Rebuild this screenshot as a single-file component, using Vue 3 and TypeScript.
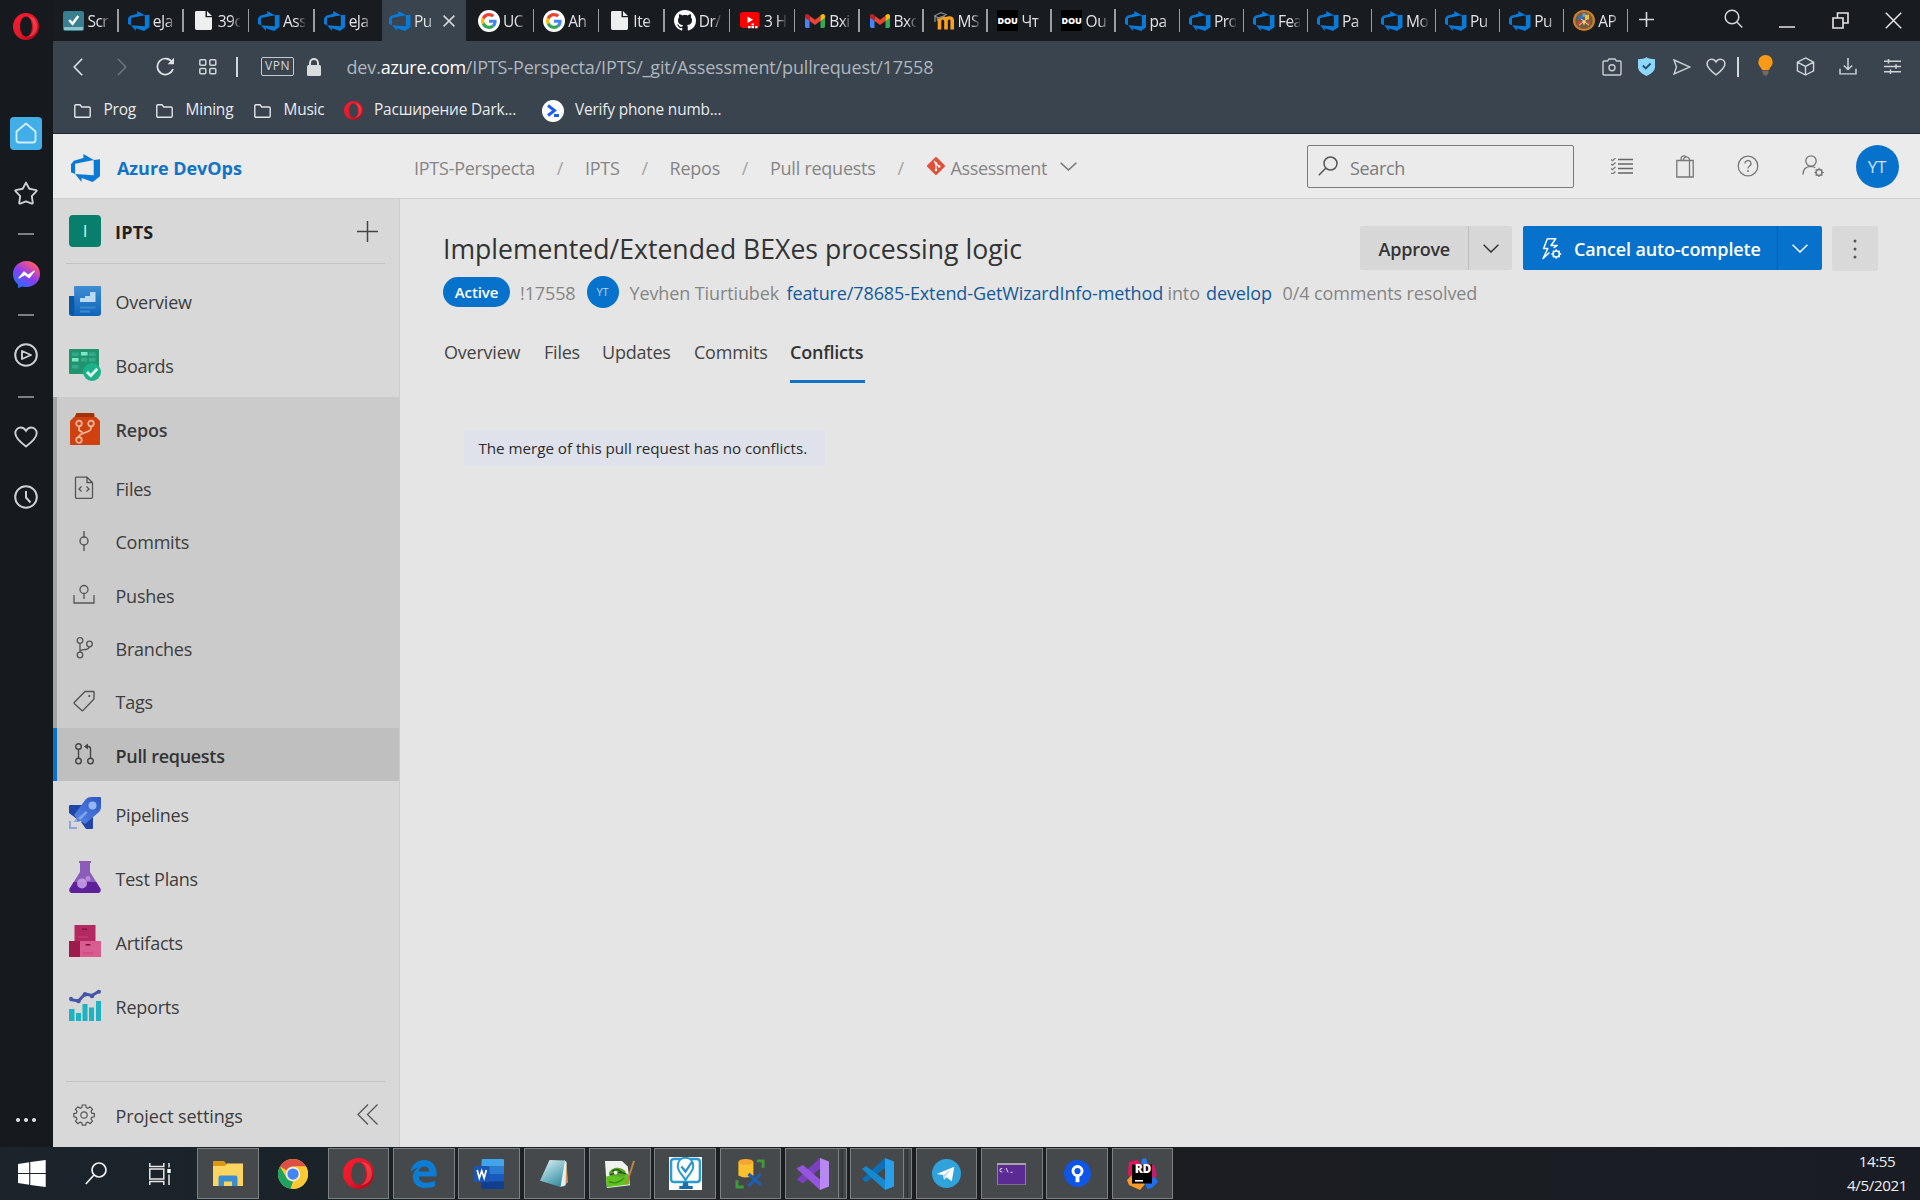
<script setup lang="ts">
import { h } from 'vue'

/* Inner markup of every glyph, keyed by name: [viewBox, markup] */
const glyphs: Record<string, [string, string]> = {
  azure: ['1 1 14 14', '<path fill="#0a7ad6" d="M15 3.622v8.512L11.5 15l-5.425-1.975v1.958L3.004 10.97l8.951.7V4.005L15 3.622zm-2.984.428L6.994 1v2.001L2.382 4.356 1 6.13v4.029l1.978.873V5.869l9.038-1.818z"/>'],
  opera: ['0 0 26 27', '<defs><linearGradient id="opg" x1="0" y1="0" x2="1" y2="1"><stop offset="0" stop-color="#ff1b2d"/><stop offset=".55" stop-color="#e0182a"/><stop offset="1" stop-color="#a70014"/></linearGradient></defs><path fill="url(#opg)" fill-rule="evenodd" d="M13 0a13 13.5 0 1 0 0 27a13 13.5 0 1 0 0-27zM13 3.6c3.6 0 5.9 4.300 5.900 9.900s-2.300 9.900-5.900 9.900s-5.900-4.300-5.900-9.900s2.300-9.900 5.900-9.900z"/><path fill="#ff5a5f" opacity=".55" d="M14.500 3.500c3.600 1 5.700 4.700 5.700 10s-2.100 9-5.700 10c6 .5 9.800-4.500 9.800-10s-3.800-10.500-9.800-10z"/>'],
  checkbox: ['0 0 22 22', '<rect width="22" height="22" rx="2.500" fill="#2f8393"/><rect x="1" y="17.500" width="20" height="3.500" rx="1" fill="#8fc4cc"/><rect x="1" y="1" width="20" height="16" rx="1.500" fill="#3a7f90"/><path d="M6.500 10l3.500 4 6-8.500" fill="none" stroke="#fff" stroke-width="2.600"/>'],
  doc: ['0 0 17 20', '<path fill="#eceef0" d="M0 1.500Q0 0 1.500 0H10.500V6.500H17V18.500Q17 20 15.500 20H1.500Q0 20 0 18.500zM12 0l5 5.200h-5z"/>'],
  google: ['0 0 22 22', '<circle cx="11" cy="11" r="11" fill="#fff"/><g transform="translate(3 3) scale(.333)"><path fill="#EA4335" d="M24 9.500c3.540 0 6.710 1.220 9.210 3.600l6.850-6.850C35.900 2.380 30.470 0 24 0 14.620 0 6.510 5.380 2.560 13.220l7.980 6.190C12.430 13.720 17.740 9.500 24 9.500z"/><path fill="#4285F4" d="M46.980 24.550c0-1.570-.15-3.090-.38-4.550H24v9.020h12.940c-.58 2.960-2.260 5.480-4.780 7.180l7.730 6c4.510-4.180 7.090-10.360 7.090-17.650z"/><path fill="#FBBC05" d="M10.530 28.590c-.48-1.450-.76-2.990-.76-4.590s.27-3.140.76-4.590l-7.980-6.190C.92 16.460 0 20.120 0 24c0 3.880.92 7.540 2.560 10.780l7.970-6.190z"/><path fill="#34A853" d="M24 48c6.480 0 11.930-2.130 15.890-5.810l-7.730-6c-2.150 1.450-4.920 2.300-8.160 2.300-6.260 0-11.570-4.220-13.470-9.910l-7.980 6.190C6.510 42.620 14.620 48 24 48z"/></g>'],
  github: ['0 0 16 16', '<path fill="#fff" d="M8 0C3.580 0 0 3.580 0 8c0 3.540 2.290 6.530 5.470 7.590.4.07.55-.17.55-.38 0-.19-.01-.82-.01-1.490-2.010.37-2.530-.49-2.690-.94-.09-.23-.48-.94-.82-1.130-.28-.15-.68-.52-.01-.53.63-.01 1.080.58 1.230.82.72 1.210 1.870.87 2.330.66.07-.52.28-.87.51-1.070-1.780-.2-3.640-.89-3.640-3.950 0-.87.31-1.590.82-2.150-.08-.2-.36-1.020.08-2.120 0 0 .67-.21 2.200.82.64-.18 1.320-.27 2-.27s1.360.09 2 .27c1.530-1.040 2.200-.82 2.200-.82.44 1.100.16 1.920.08 2.120.51.56.82 1.270.82 2.150 0 3.070-1.870 3.750-3.650 3.950.29.25.54.73.54 1.480 0 1.070-.01 1.930-.01 2.200 0 .21.15.46.55.38A8.010 8.010 0 0 0 16 8c0-4.420-3.580-8-8-8z"/>'],
  youtube: ['0 0 20 17', '<rect width="19.500" height="16" rx="3" fill="#f00"/><path fill="#fff" d="M7.500 4.500v6.500l5.500-3.200zM8 14h2.500v2.200H8zM11.500 14H14v2.200h-2.500zM15 14h2.500v2.200H15zM11.500 11.500H14v1.800h-2.500z"/>'],
  gmail: ['0 0 20 15', '<path fill="#4285f4" d="M0 2v11.500Q0 15 1.500 15h3V5z"/><path fill="#34a853" d="M20 2v11.500q0 1.500-1.500 1.500h-3V5z"/><path fill="#ea4335" d="M4.500 2l5.500 4.200L15.500 2v5.500L10 11.700 4.500 7.500z"/><path fill="#c5221f" d="M0 2.200C0 .2 2.200-.7 3.700.7l.8.7v6L0 4.100z"/><path fill="#fbbc04" d="M20 2.200C20 .2 17.800-.7 16.300.7l-.8.7v6L20 4.100z"/>'],
  moodle: ['0 0 20 20', '<path fill="none" stroke="#f9a01e" stroke-width="3.600" d="M5.500 19.500V10q0-3.500 3.200-3.500T12 10v9.500M12 19.500V10q0-3.500 3.200-3.500t3 3.500v9.500"/><path fill="none" stroke="#8a8a8a" stroke-width="1.300" d="M0 4.500L7 .800l5 2-6 4.200zM1 5v6M3.500 6v4"/>'],
  crest: ['0 0 22 22', '<circle cx="11" cy="11" r="11" fill="#c9822b"/><circle cx="11" cy="11" r="8.800" fill="#7a5a3c"/><path fill="#3b6fb5" d="M5 6h5v4H5z"/><path fill="#e8c33a" d="M12 5h4v5h-4zM9 11.500h4l-2 5z"/><path fill="#d9473a" d="M5 12h3v3H5zM14 12h3v3h-3z"/><path fill="#6fa5dd" d="M9.500 3.500h3V7h-3z"/><path d="M6 16l5-4 5 4M8 9.500l3 2 3-2" stroke="#f0e6d2" fill="none" stroke-width=".9"/>'],
  close: ['0 0 12 12', '<path d="M.6.600l10.800 10.800M11.400.600L.6 11.400" stroke="#d5d8db" stroke-width="1.500" fill="none"/>'],
  plus: ['0 0 14 14', '<path d="M7 0v14M0 7h14" stroke="#d5d8db" stroke-width="1.500"/>'],
  find: ['0 0 19 19', '<circle cx="8" cy="8" r="6.800" stroke="#d5d8db" stroke-width="1.500" fill="none"/><path d="M12.800 13l5.500 5.500" stroke="#d5d8db" stroke-width="1.500"/>'],
  minimize: ['0 0 16 16', '<path d="M0 15h16" stroke="#e5e5e5" stroke-width="1.500"/>'],
  restore: ['0 0 17 17', '<path d="M1 6h10v10H1zM5.500 6V1H16v10h-5" fill="none" stroke="#e5e5e5" stroke-width="1.600"/>'],
  closeWin: ['0 0 17 17', '<path d="M.8.800l15.400 15.400M16.200.800L.8 16.200" stroke="#e5e5e5" stroke-width="1.500"/>'],
  back: ['0 0 10 18', '<path d="M9.200.800L1.200 9l8 8.200" fill="none" stroke="#dfe2e5" stroke-width="1.600"/>'],
  forward: ['0 0 10 18', '<path d="M.8.800L8.800 9l-8 8.200" fill="none" stroke="#69737d" stroke-width="1.600"/>'],
  reload: ['0 0 19 19', '<path d="M16 5A8 8 0 1 0 17 12" fill="none" stroke="#dfe2e5" stroke-width="1.700"/><path d="M18 .800v6.400h-6.400z" fill="#dfe2e5"/>'],
  grid: ['0 0 18 16', '<g fill="none" stroke="#cfd4d8" stroke-width="1.500"><rect x=".8" y=".8" width="6" height="5.400" rx="1"/><rect x="10.800" y=".8" width="6" height="5.400" rx="1"/><rect x=".8" y="9.400" width="6" height="5.400" rx="1"/><rect x="10.800" y="9.400" width="6" height="5.400" rx="1"/></g>'],
  lock: ['0 0 14 18', '<rect y="7" width="14" height="11" rx="1.500" fill="#d9dcdf"/><path d="M3 8V5a4 4 0 0 1 8 0v3" fill="none" stroke="#d9dcdf" stroke-width="2"/>'],
  folder: ['0 0 17 14', '<path d="M.8 12V2q0-1.200 1.200-1.200h4L7.800 3H15q1.200 0 1.200 1.200V12q0 1.200-1.200 1.200H2Q.8 13.200.8 12z" fill="none" stroke="#e3e6e8" stroke-width="1.400"/>'],
  phone: ['0 0 22 22', '<circle cx="11" cy="11" r="11" fill="#fff"/><path d="M6 5.500l6.500 5L6 15.500M12 15.500h5" stroke="#1f5df0" stroke-width="3" fill="none"/>'],
  camera: ['0 0 20 18', '<path d="M1 4q0-1 1-1h3.500L7 1h6l1.500 2H18q1 0 1 1v12q0 1-1 1H2q-1 0-1-1z" fill="none" stroke="#c9ced2" stroke-width="1.400"/><circle cx="10" cy="9.700" r="3" fill="none" stroke="#c9ced2" stroke-width="1.400"/>'],
  shield: ['0 0 17 19', '<path d="M8.500 0Q10 2 17 2.200v8.300Q16.500 15.500 8.500 19 .5 15.500 0 10.500V2.200Q7 2 8.500 0z" fill="#8fd6fb"/><path d="M4.800 8.500l3 3 4.800-5" fill="none" stroke="#24506b" stroke-width="1.900"/>'],
  send: ['0 0 18 16', '<path d="M1 1l16 7L1 15l2.500-7z" fill="none" stroke="#c9ced2" stroke-width="1.400"/>'],
  heart: ['0 0 24 22', '<path d="M12 20.500C6 16 1.300 12 1.300 7.300 1.300 4 3.800 1.500 6.800 1.500c2.200 0 4 1.200 5.200 3.300 1.200-2.100 3-3.300 5.200-3.300 3 0 5.500 2.500 5.500 5.800C22.700 12 18 16 12 20.500z" fill="none" stroke="#ccd0d4" stroke-width="1.900"/>'],
  bulb: ['0 0 15 21', '<path d="M7.500 0a7.200 7.200 0 0 1 7.200 7.200c0 3.500-2.700 4.800-3.700 7.800H4C3 12 .3 10.700.3 7.200A7.200 7.200 0 0 1 7.500 0z" fill="#f89a18"/><path d="M4.500 15.500h6v2.500L9 20.500H6L4.500 18z" fill="#74695a"/>'],
  cube: ['0 0 20 20', '<path d="M10 1l8.500 4.500v9L10 19l-8.500-4.500v-9zM1.500 5.500L10 10l8.500-4.500M10 10v9" fill="none" stroke="#cfd4d8" stroke-width="1.500"/>'],
  download: ['0 0 18 18', '<path d="M9 0v12M4.800 8L9 12.200 13.200 8M1 11.500V16.800H17V11.500" fill="none" stroke="#cfd4d8" stroke-width="1.500"/>'],
  sliders: ['0 0 17 15', '<path d="M0 2.200h17M0 7.500h17M0 12.800h17M4.500 0v4.400M12 5.300v4.400M6.500 10.600V15" stroke="#cfd4d8" stroke-width="1.500"/>'],
  house: ['0 0 32 32', '<path d="M6.500 14.500L16 6.500l9.500 8v8.500q0 2.500-2.500 2.500H9q-2.500 0-2.500-2.500z" fill="none" stroke="#d2effc" stroke-width="1.800" stroke-linejoin="round"/>'],
  star: ['0 0 24 24', '<path d="M12 1.600l3.300 6.200 6.900 1.300q.9.300.3 1.100l-4.700 5 1 6.700q0 1-1 .7L12 20.300l-5.800 2.300q-1 .300-1-.7l1-6.700-4.700-5q-.6-.8.3-1.100l6.900-1.300z" fill="none" stroke="#ccd0d4" stroke-width="1.900" stroke-linejoin="round"/>'],
  messenger: ['0 0 27 27', '<defs><linearGradient id="msg" x1=".1" y1="1" x2=".8" y2="0"><stop offset="0" stop-color="#1877ff"/><stop offset=".5" stop-color="#8a3df2"/><stop offset=".85" stop-color="#f0518a"/><stop offset="1" stop-color="#ff6968"/></linearGradient></defs><path d="M13.500 0C21 0 27 5.500 27 13s-6 13-13.500 13q-2 0-4-.6L5 27v-3.600Q0 19.500 0 13C0 5.500 6 0 13.500 0z" fill="url(#msg)"/><path d="M6 17l5-6 4.200 3.200 6-4-5 6.500-4.400-3.200z" fill="#fff" stroke="#fff" stroke-width="1.200" stroke-linejoin="round"/>'],
  play: ['0 0 24 24', '<circle cx="12" cy="12" r="10.800" fill="none" stroke="#ccd0d4" stroke-width="2"/><path d="M8 8v8l9-4z" fill="none" stroke="#ccd0d4" stroke-width="1.900" stroke-linejoin="round"/>'],
  clock: ['0 0 24 24', '<circle cx="12" cy="12" r="10.800" fill="none" stroke="#ccd0d4" stroke-width="2"/><path d="M12 6v6.500l4.500 5" fill="none" stroke="#ccd0d4" stroke-width="2"/>'],
  overview: ['0 0 32 30', '<defs><linearGradient id="ovg" x1="0" y1="0" x2="0" y2="1"><stop offset="0" stop-color="#3f8dd3"/><stop offset="1" stop-color="#0d65bb"/></linearGradient></defs><path d="M0 10h6v20H3q-3 0-3-3z" fill="#0b58a6"/><path d="M5 1q0-1 1-1h25q1 0 1 1v26q0 3-3 3H3q2.500 0 2.500-3z" fill="url(#ovg)"/><path d="M11 12h5v4h-5zM16 10h5v6h-5zM21 6h5.500v10H21z" fill="#bcd9f2"/><path d="M11 20.500h15.500v2H11zM11 24.500h10v2H11z" fill="#3e88cd"/>'],
  boards: ['0 0 32 32', '<rect width="30" height="25" rx="1" fill="#22936f"/><path d="M3 3.500h6.500v3.500H3zM20 3.500h6.500v3.500H20zM12 9h6v3.500h-6zM20 9h6.500v3.500H20zM3 16h6.500v3.500H3z" fill="#33aa8b"/><path d="M12 3h6.500v3.500H12zM3 9h6.500v3.500H3z" fill="#7fe6c8"/><circle cx="23" cy="23" r="9" fill="#1bb18a"/><path d="M18 23l3.800 3.800 6.500-7" fill="none" stroke="#dff8f0" stroke-width="2.800"/>'],
  repos: ['0 0 30 32', '<path d="M6 1q0-1 1-1h16q1.500 0 1.500 1.500V4H4.500z" fill="#a33307"/><path d="M4 4h22l4 4v23q0 1-1 1H1q-1 0-1-1V8z" fill="#cf420f"/><g fill="none" stroke="#f6b9a0" stroke-width="1.700"><circle cx="9" cy="10.500" r="2.800"/><circle cx="21" cy="10.500" r="2.800"/><circle cx="9" cy="27" r="2.800"/><path d="M9 13.300v4l3.500 2.200M21 13.300v2q0 2-2.500 3l-7 2.700q-2.500 1-2.500 3.200"/></g>'],
  pipelines: ['0 0 32 32', '<defs><linearGradient id="ppg" x1="1" y1="0" x2="0" y2="1"><stop offset="0" stop-color="#2b57c8"/><stop offset="1" stop-color="#5a86e3"/></linearGradient></defs><path d="M0 9q0-1 1-1h14L8 22 0 16z" fill="#1f46a8"/><path d="M24 16v15q0 1-1 1h-6l-5-7z" fill="#1f46a8"/><path d="M17 2q2-2 5-2h9q1 0 1 1v9q0 3-2 5L16 27l-4-3-4 1-1-5-2-2z" fill="url(#ppg)"/><circle cx="23.500" cy="8.500" r="4" fill="#94b6f2"/><path d="M9 21l8-7 1.500 1.500-7 7.500z" fill="#7fa5ee"/><path d="M0 24h2v6h6v2H0zM4 25l3-3 1.500 3z" fill="#92a5d8"/>'],
  tests: ['0 0 32 32', '<path d="M10 0h12v2h-1v9l10.300 16.500Q32.500 32 28 32H4Q-.5 32 .7 27.500L11 11V2h-1z" fill="#8b5cb8"/><path d="M4.700 21h22.600l4 6.500Q32.500 32 28 32H4Q-.5 32 .7 27.500z" fill="#5e209b"/><circle cx="13" cy="22.500" r="5" fill="#c9a5e6" opacity=".85"/><circle cx="19" cy="17.500" r="2.500" fill="#b58ad9"/>'],
  artifacts: ['0 0 32 32', '<path d="M5.500 0h21v16h-21z" fill="#b32960"/><path d="M0 16h11v16H0z" fill="#9c1a4c"/><path d="M11 16h21v16H11z" fill="#d95c8e"/><path d="M13 3.500h5v1.600h-5zM16.500 19h5v1.600h-5z" fill="#7d1440"/><path d="M9 11h10v2H9zM14 27h10v2H14z" fill="#c4457a" opacity=".6"/>'],
  reports: ['0 0 32 32', '<path d="M1 10.500l8.500 1.500L16 5l7 1.500L30.500 2" fill="none" stroke="#4455ac" stroke-width="3"/><g fill="#4455ac"><circle cx="2" cy="9.800" r="2"/><circle cx="9.500" cy="12" r="2.300"/><circle cx="16" cy="5.500" r="2.300"/><circle cx="23" cy="7" r="2.300"/><circle cx="30" cy="2.700" r="2"/></g><path d="M0 20h5.500v12H0zM7 24h5v8H7zM13.500 15h5v17h-5zM20 18.500h5V32h-5zM27 12h5v20h-5z" fill="#1fb3c2"/>'],
  files: ['0 0 22 24', '<g fill="none" stroke="#555" stroke-width="1.300"><path d="M2.500 2Q2.500 1.200 3.300 1.200H14L19.500 6.500V21q0 1.300-1.300 1.300H3.800Q2.500 22.300 2.500 21zM14 1.200V6.500h5.500"/><path d="M8.500 10.500L6 13l2.500 2.500M13.500 10.500L16 13l-2.500 2.500"/></g>'],
  commits: ['0 0 22 24', '<g fill="none" stroke="#555" stroke-width="1.400"><circle cx="11" cy="12" r="4"/><path d="M11 2v6M11 16v6"/></g>'],
  pushes: ['0 0 22 24', '<g fill="none" stroke="#555" stroke-width="1.300"><circle cx="11" cy="7.500" r="4"/><path d="M11 11.500v5.500M1 13v8h20v-8"/></g>'],
  branches: ['0 0 22 24', '<g fill="none" stroke="#555" stroke-width="1.300"><circle cx="7" cy="4.500" r="2.800"/><circle cx="7" cy="19" r="2.800"/><circle cx="16.500" cy="8" r="2.800"/><path d="M7 7.300v8.900M16.500 10.800q-1 2.700-4 2.700-4 0-5.500 1.500"/></g>'],
  tags: ['0 0 22 24', '<path d="M1.200 13.500L12 2.500h8.500q.5 0 .5.500v7L10 21.500q-.6.400-1.200 0L1.200 14.500z" fill="none" stroke="#555" stroke-width="1.400"/><circle cx="16.300" cy="7" r="1.100" fill="#555"/>'],
  prs: ['0 0 22 24', '<g fill="none" stroke="#444" stroke-width="1.400"><circle cx="5.500" cy="4.500" r="2.800"/><circle cx="5.500" cy="19" r="2.800"/><circle cx="17.500" cy="19" r="2.800"/><path d="M5.500 7.300v8.900M17.500 16.200V7q0-2.500-2.500-2.500h-3"/></g><path d="M11 4.500l4-3v6z" fill="#444"/>'],
  gear: ['0 0 22 22', '<circle cx="11" cy="11" r="3.200" fill="none" stroke="#555" stroke-width="1.200"/><path d="M9.300 1h3.400l.5 2.600 1.700.7L17.100 2.800l2.400 2.400-1.500 2.200.7 1.700 2.600.5v3.200l-2.600.5-.7 1.700 1.500 2.200-2.400 2.400-2.200-1.500-1.700.7-.5 2.400H9.300l-.5-2.400-1.700-.7-2.200 1.500-2.400-2.400L4 15l-.7-1.700L.8 12.800V9.600l2.500-.5L4 7.400 2.500 5.200l2.400-2.400 2.200 1.500 1.700-.7z" fill="none" stroke="#555" stroke-width="1.200"/>'],
  collapse: ['0 0 21 21', '<path d="M11 .500L1 10.500l10 10M20.500.500l-10 10 10 10" fill="none" stroke="#555" stroke-width="1.300"/>'],
  add: ['0 0 21 21', '<path d="M10.500 0v21M0 10.500h21" stroke="#444" stroke-width="1.500"/>'],
  git: ['0 0 20 20', '<rect x="3.300" y="3.300" width="13.400" height="13.400" rx="1" transform="rotate(45 10 10)" fill="#e0503a"/><path d="M8 5l2 2v7M10 7.500l3 3" stroke="#fff" stroke-width="1.100" fill="none"/><circle cx="10" cy="7.500" r="1.200" fill="#fff"/><circle cx="10" cy="14" r="1.200" fill="#fff"/><circle cx="13.200" cy="10.500" r="1.200" fill="#fff"/>'],
  chevron: ['0 0 16 9', '<path d="M.6.800L8 8l7.400-7.200" fill="none" stroke="currentColor" stroke-width="1.500"/>'],
  search: ['0 0 20 20', '<circle cx="12.500" cy="7.500" r="6.500" stroke="#555" stroke-width="1.500" fill="none"/><path d="M7.700 12.200L.8 19.200" stroke="#555" stroke-width="1.500"/>'],
  list: ['0 0 22 16', '<path d="M7 1.500h15M7 6h15M7 10.500h15M7 15h15" stroke="#666" stroke-width="1.500"/><path d="M0 1.500l1.500 1.300L4.500 0M0 6l1.500 1.300L4.500 4.500M0 10.500l1.500 1.300L4.500 9M0 15l1.500 1.300L4.500 13.500" stroke="#777" stroke-width="1.200" fill="none"/>'],
  bag: ['0 0 18 23', '<path d="M.8 5.500h16.400V22H.8zM13.500 5.500V22M5 5.500V4a3 3 0 0 1 5 -2.300M7.500 5.500V4a3.200 3.200 0 0 1 6 0v1.500" fill="none" stroke="#777" stroke-width="1.300"/>'],
  help: ['0 0 22 22', '<circle cx="11" cy="11" r="9.800" fill="none" stroke="#777" stroke-width="1.300"/><path d="M8 8.500a3 3 0 1 1 4.300 2.700q-1.300.7-1.300 2.300" fill="none" stroke="#777" stroke-width="1.300"/><circle cx="11" cy="16" r="1" fill="#777"/>'],
  person: ['0 0 22 22', '<circle cx="9" cy="6" r="5.200" fill="none" stroke="#777" stroke-width="1.300"/><path d="M1 19.500q0-8 8-8.200 2.500 0 4.200 1.400" fill="none" stroke="#777" stroke-width="1.300"/><circle cx="17" cy="17.500" r="3" fill="none" stroke="#777" stroke-width="1.600"/><path d="M17 12.800v1.700M17 20.500v1.500M12.500 17.500H14M20 17.500h2M13.700 14.300l1 1M20.300 20.700l-1-1M20.300 14.300l-1 1M13.700 20.700l1-1" stroke="#777" stroke-width="1.200"/>'],
  bolt: ['0 0 20 22', '<path d="M6 .8h8L9.500 7.500h6L12 10M6 .8L2.500 10.500h4L2 20.500l6-6" fill="none" stroke="#fff" stroke-width="1.400" stroke-linejoin="round"/><circle cx="14.500" cy="16" r="3" fill="none" stroke="#fff" stroke-width="1.600"/><path d="M14.500 11.300v1.700M14.500 19v1.800M9.800 16h1.700M17.500 16h1.800M11.200 12.700l1.200 1.200M17.800 19.300l-1.200-1.200M17.800 12.700l-1.200 1.200M11.200 19.300l1.200-1.200" stroke="#fff" stroke-width="1.300"/>'],
  more: ['0 0 4 20', '<circle cx="2" cy="2" r="1.500" fill="#555"/><circle cx="2" cy="10" r="1.500" fill="#555"/><circle cx="2" cy="18" r="1.500" fill="#555"/>'],
  windows: ['0 0 28 27', '<path fill="#fff" d="M0 3.900l11.200-1.600V13H0zM12.300 2.100L27.700 0v13H12.300zM0 14h11.200v10.700L0 23.100zM12.300 14h15.400v13l-15.400-2.100z"/>'],
  taskFind: ['0 0 22 23', '<circle cx="14" cy="8" r="7" stroke="#f0f0f0" stroke-width="1.700" fill="none"/><path d="M9 13L.8 22" stroke="#f0f0f0" stroke-width="1.700"/>'],
  taskView: ['0 0 22 22', '<path d="M.8 0v3.500h14V0M.8 22v-3.500h14V22M.8 6h14v10H.8z" fill="none" stroke="#e8e8e8" stroke-width="1.500"/><path d="M20 0v4.500M20 11.500V22" stroke="#e8e8e8" stroke-width="1.500"/><path d="M18.300 6h3.400v4h-3.400z" fill="#fff"/>'],
  explorer: ['0 0 30 26', '<path d="M0 0h11l2.500 3v5H0z" fill="#d9980f"/><path d="M0 5h12l2-2.500h16V25H0z" fill="#fbd560"/><path d="M5.500 25v-8.500q0-2 2-2h15q2 0 2 2V25h-5.500v-4.500h-8V25z" fill="#3a8dd0"/>'],
  chrome: ['0 0 48 48', '<circle cx="24" cy="24" r="24" fill="#fcc934"/><path d="M24 0A24 24 0 0 1 44.800 12H24A12 12 0 0 0 13.600 18L3.200 12A24 24 0 0 1 24 0z" fill="#dd5144"/><path d="M3.200 12L13.600 30A12 12 0 0 0 24 36L20 47.700A24 24 0 0 1 3.200 12z" fill="#1ea362"/><path d="M34.400 30L24 48A24 24 0 0 0 44.800 12H24A12 12 0 0 1 34.400 30z" fill="#fcc934"/><circle cx="24" cy="24" r="11.500" fill="#f1f1f1"/><circle cx="24" cy="24" r="9" fill="#4285f4"/>'],
  edge: ['0 0 28 29', '<path fill="#0c7cd5" d="M.5 12.500C2 4 8 0 14.500 0 22.500 0 27.500 5.500 27.500 13v4H9c.3 4.500 4 6.500 8.500 6.500 3.300 0 6-.9 8.500-2.300V27c-3 1.500-6.500 2-10 2C8 29 3 24.500 3 17.500c0-4.500 2.500-8 6.500-10C6 8.200 2.500 10 .5 12.500zM9 12h11c0-3.500-2-5.300-5.300-5.300C11.500 6.700 9.500 9 9 12z"/>'],
  word: ['0 0 32 30', '<path d="M8 1q0-1 1-1h21q1 0 1 1v6.500H7.500z" fill="#41a5ee"/><path d="M7.500 7.500H31V15H7.500z" fill="#2b7cd3"/><path d="M7.500 15H31v7.500H7.500z" fill="#185abd"/><path d="M7.500 22.500H31V29q0 1-1 1H8.500q-1 0-1-1z" fill="#103f91"/><rect y="7" width="16" height="16" rx="1.500" fill="#1a55b5"/><path d="M3.300 11l2.200 8L8 12l2.500 7 2.200-8" stroke="#fff" stroke-width="1.800" fill="none"/>'],
  notepad: ['0 0 30 30', '<defs><linearGradient id="npg" x1="0" y1="0" x2=".6" y2="1"><stop offset="0" stop-color="#e9f6f8"/><stop offset=".5" stop-color="#8ec4d0"/><stop offset="1" stop-color="#3f93a6"/></linearGradient></defs><path d="M24 28.500l5-4.500L27.500 4 25 2z" fill="#c9955a"/><path d="M21 29l5.500-1.500L27.500 3 25 1z" fill="#e9edee"/><path d="M10.500 1L26 1.500 21.500 29 1 22.500z" fill="url(#npg)"/>'],
  notepadpp: ['0 0 32 32', '<path d="M1 2h17.500l6 6L27 28 3 31z" fill="#f0f2ee"/><path d="M2 19q10-4 23-3l1.500 11L3 30z" fill="#5fc41f"/><path d="M5 15c3-7 12-7 16-3s0 8-6 7-9 1-10-4z" fill="#5aa52a"/><path d="M6 17q9-5 17-1M8 13q6-4 10 1" fill="none" stroke="#234a12" stroke-width="1.300"/><circle cx="12" cy="14.500" r="2" fill="#e8f5de"/><path d="M31 2L23 27" stroke="#c0843c" stroke-width="2"/><path d="M5 24q8 4 16-4" fill="none" stroke="#3c8d15" stroke-width="1.500"/>'],
  board: ['0 0 32 33', '<path d="M0 0h32v33H0z" fill="#fff"/><path d="M5 2h22q3 0 3 3v17q0 3-3 3H5q-3 0-3-3V5q0-3 3-3z" fill="none" stroke="#2b9bd1" stroke-width="2.400"/><path d="M14 25h4l1 4h4v3H10v-3h3z" fill="#1a6fa8"/><path d="M16 .800c5 0 7.500 4 7.500 8.500 0 6-5 8-7.500 14-2.500-6-7.500-8-7.500-14C8.500 4.800 11 .8 16 .8z" fill="#fff" stroke="#2b9bd1" stroke-width="2"/><path d="M12 9.500l4 5 6.500-10" fill="none" stroke="#2b8fc9" stroke-width="2.200"/>'],
  ssms: ['0 0 32 32', '<path d="M3.500 4v14q7 4 15.500 0V4z" fill="#fbc02d"/><ellipse cx="11.200" cy="4" rx="7.700" ry="3" fill="#f7a531"/><path d="M22.500 3H29v7M2 23v7h7" fill="none" stroke="#3f9a3b" stroke-width="3"/><path d="M14 16.500L27 28M26 16.500L14 29" stroke="#1f5fb0" stroke-width="3.300"/>'],
  vs: ['0 0 32 32', '<path d="M23 0l9 3.500v25L23 32z" fill="#b888f2"/><path d="M23 0v10.500L6 25.500 0 22V21z" fill="#7b3fc0"/><path d="M23 32V21.500L6 7 0 10v1z" fill="#9556dd"/>'],
  vscode: ['0 0 32 32', '<path d="M23 0l9 3.500v25L23 32z" fill="#26a0ea"/><path d="M23 0v10L4 24.500 0 21z" fill="#0d6fb8"/><path d="M23 32V22L4 8 0 11z" fill="#1689cf"/>'],
  telegram: ['0 0 30 30', '<circle cx="15" cy="15" r="15" fill="#30a3dc"/><path d="M5 15.500L23 8l-2.500 15-5.500-4-2.500 2.500-1-5z" fill="#fff"/><path d="M11.500 16.500L20 10.500l-6 7.500-1.500 3.500z" fill="#c6dcea"/>'],
  cmd: ['0 0 30 22', '<rect width="29" height="21.500" x=".5" y=".3" fill="#5b2b93" stroke="#8c8c8c"/><path d="M0 0h30v2H0z" fill="#a5a5a8"/><path d="M5.500 5.500Q3 5 3 7.200T5.500 9M7.500 6.500v.3M7.500 8.500v.3M9.500 5l2 4.500M14 9.300h2" stroke="#e5d9f2" stroke-width="1" fill="none"/>'],
  sourcetree: ['0 0 28 28', '<circle cx="14" cy="14" r="14" fill="#0f56e6"/><circle cx="14" cy="11.500" r="4.700" fill="none" stroke="#fff" stroke-width="3"/><path d="M12 16h4v7h-4z" fill="#fff"/>'],
  rider: ['0 0 31 32', '<path d="M2 4l8-2 6 6-2 14-9 2-4-8z" fill="#e8125c"/><path d="M14 2l3-2 3 5 8 3 2 10-5 3-10-9z" fill="#c21d6b"/><path d="M15 1l4-1 2 7h-7z" fill="#2a76e8"/><path d="M0 22l6-6 12 10-5 6L2 27z" fill="#fd9c28"/><path d="M18 24l10-5 3 5-6 6-5 1z" fill="#1f6ff0"/><rect x="5" y="6.500" width="20" height="19" fill="#000"/><path d="M8 22.800h8" stroke="#fff" stroke-width="1.600"/>'],
}

/* Draws one glyph, stretched to the given width and height */
const Ic = (p: { n: string; w: number | string; h?: number | string }) => {
  const [box, inner] = glyphs[p.n]
  return h('svg', {
    viewBox: box,
    width: p.w,
    height: p.h ?? p.w,
    preserveAspectRatio: 'none',
    style: 'display:block;flex:none',
    innerHTML: inner,
  })
}

interface Tab { icon: string; text: string; w: number; iw?: number; ih?: number; active?: boolean; noline?: boolean }
const az = { icon: 'azure', iw: 21.500, ih: 20 }
const tabs: Tab[] = [
  { icon: 'checkbox', text: 'Scr', w: 65.400, iw: 21, ih: 20 },
  { ...az, text: 'eJa', w: 64.900 },
  { icon: 'doc', text: '39c', w: 65.300, iw: 17, ih: 19 },
  { ...az, text: 'Ass', w: 65.700 },
  { ...az, text: 'eJa', w: 68.100, noline: true },
  { ...az, text: 'Pu', w: 84.100, active: true, noline: true },
  { icon: 'google', text: 'UC', w: 67.400, iw: 22, ih: 22 },
  { icon: 'google', text: 'Ah', w: 65.100, iw: 22, ih: 22 },
  { icon: 'doc', text: 'Ite', w: 65.400, iw: 17, ih: 19 },
  { icon: 'github', text: 'Dr/', w: 65.200, iw: 22, ih: 21 },
  { icon: 'youtube', text: '3 H', w: 65.300, iw: 20, ih: 17 },
  { icon: 'gmail', text: 'Bxi', w: 64.400, iw: 20, ih: 14 },
  { icon: 'gmail', text: 'Bxo', w: 64, iw: 20, ih: 14 },
  { icon: 'moodle', text: 'MS', w: 64, iw: 20, ih: 18 },
  { icon: 'dou', text: 'Чт', w: 64 },
  { icon: 'dou', text: 'Ou', w: 64 },
  { ...az, text: 'pa', w: 64.300 },
  { ...az, text: 'Pro', w: 64 },
  { ...az, text: 'Fea', w: 64 },
  { ...az, text: 'Pa', w: 64.100 },
  { ...az, text: 'Mo', w: 64 },
  { ...az, text: 'Pu', w: 64.200 },
  { ...az, text: 'Pu', w: 64 },
  { icon: 'crest', text: 'AP', w: 64, iw: 22, ih: 21 },
]

const services = [
  { icon: 'overview', label: 'Overview', h: 30 },
  { icon: 'boards', label: 'Boards', h: 32 },
]
const repoItems = [
  { icon: 'files', label: 'Files' },
  { icon: 'commits', label: 'Commits' },
  { icon: 'pushes', label: 'Pushes' },
  { icon: 'branches', label: 'Branches' },
  { icon: 'tags', label: 'Tags' },
  { icon: 'prs', label: 'Pull requests', selected: true },
]
const services2 = [
  { icon: 'pipelines', label: 'Pipelines' },
  { icon: 'tests', label: 'Test Plans' },
  { icon: 'artifacts', label: 'Artifacts' },
  { icon: 'reports', label: 'Reports' },
]
const crumbs = ['IPTS-Perspecta', 'IPTS', 'Repos', 'Pull requests']
const prTabs = ['Overview', 'Files', 'Updates', 'Commits', 'Conflicts']

interface App { icon: string; w: number; h: number; open?: boolean; stack?: boolean }
const apps: App[] = [
  { icon: 'explorer', w: 30, h: 26, open: true },
  { icon: 'chrome', w: 30, h: 30 },
  { icon: 'opera', w: 31, h: 31, open: true },
  { icon: 'edge', w: 27, h: 28, open: true },
  { icon: 'word', w: 31, h: 30, open: true },
  { icon: 'notepad', w: 30, h: 29, open: true },
  { icon: 'notepadpp', w: 31, h: 30, open: true },
  { icon: 'board', w: 33, h: 33, open: true },
  { icon: 'ssms', w: 31, h: 31, open: true },
  { icon: 'vs', w: 32, h: 32, open: true, stack: true },
  { icon: 'vscode', w: 32, h: 32, open: true, stack: true },
  { icon: 'telegram', w: 29, h: 29, open: true },
  { icon: 'cmd', w: 29, h: 22, open: true },
  { icon: 'sourcetree', w: 27, h: 27, open: true },
  { icon: 'rider', w: 31, h: 32, open: true },
]
</script>

<template>
  <div class="screen">
    <div class="browser">
      <aside class="rail">
        <Ic n="opera" w="26" h="27" class="r-opera" />
        <div class="r-home"><Ic n="house" w="32" /></div>
        <Ic n="star" w="24" class="r-star" />
        <i class="dash d1"></i>
        <Ic n="messenger" w="27" class="r-msg" />
        <i class="dash d2"></i>
        <Ic n="play" w="24" class="r-play" />
        <i class="dash d3"></i>
        <Ic n="heart" w="24" h="22" class="r-heart" />
        <Ic n="clock" w="24" class="r-clock" />
        <div class="dots"><i></i><i></i><i></i></div>
      </aside>

      <div class="window">
        <div class="tabstrip">
          <div
            v-for="(t, i) in tabs"
            :key="i"
            class="tab"
            :class="{ active: t.active, noline: t.noline, after: i === 6 }"
            :style="{ width: t.w + 'px' }"
          >
            <span class="fav">
              <span v-if="t.icon === 'dou'" class="dou">DOU</span>
              <Ic v-else :n="t.icon" :w="t.iw!" :h="t.ih!" />
            </span>
            <span class="tabtext">{{ t.text }}</span>
            <Ic v-if="t.active" n="close" w="12" class="tabclose" />
          </div>
          <Ic n="plus" w="15" class="newtab" />
          <div class="wincontrols">
            <Ic n="find" w="19" class="c1" />
            <Ic n="minimize" w="16" class="c2" />
            <Ic n="restore" w="17" class="c3" />
            <Ic n="closeWin" w="17" class="c4" />
          </div>
        </div>

        <div class="address">
          <Ic n="back" w="10" h="18" />
          <Ic n="forward" w="10" h="18" class="a2" />
          <Ic n="reload" w="19" class="a3" />
          <Ic n="grid" w="18" h="16" class="a4" />
          <i class="bar a5"></i>
          <span class="vpn">VPN</span>
          <Ic n="lock" w="14" h="18" class="a6" />
          <span class="url">dev.<b>azure.com</b>/IPTS-Perspecta/IPTS/_git/Assessment/pullrequest/17558</span>
          <div class="tools">
            <Ic n="camera" w="20" h="18" />
            <Ic n="shield" w="17" h="19" class="t2" />
            <Ic n="send" w="18" h="16" class="t3" />
            <Ic n="heart" w="20" h="18" class="t4" />
            <i class="bar t5"></i>
            <Ic n="bulb" w="15" h="21" class="t6" />
            <Ic n="cube" w="19" h="19" class="t7" />
            <Ic n="download" w="18" h="17" class="t8" />
            <Ic n="sliders" w="17" h="15" class="t9" />
          </div>
        </div>

        <div class="bookmarks">
          <span class="bm b1"><Ic n="folder" w="17" h="14" /><span>Prog</span></span>
          <span class="bm b2"><Ic n="folder" w="17" h="14" /><span>Mining</span></span>
          <span class="bm b3"><Ic n="folder" w="17" h="14" /><span>Music</span></span>
          <span class="bm b4"><Ic n="opera" w="19" h="19" /><span>Расширение Dark...</span></span>
          <span class="bm b5"><Ic n="phone" w="22" h="22" /><span>Verify phone numb...</span></span>
        </div>

        <div class="page">
          <header class="top">
            <Ic n="azure" w="29" h="28" class="logo" />
            <span class="brand">Azure DevOps</span>
            <nav class="crumbs">
              <template v-for="c in crumbs" :key="c"><span>{{ c }}</span><i class="slash">/</i></template>
              <Ic n="git" w="20" class="git" />
              <span class="cur">Assessment</span>
              <Ic n="chevron" w="17" h="9" class="cchev" />
            </nav>
            <div class="searchbox"><Ic n="search" w="20" /><span>Search</span></div>
            <div class="topicons">
              <Ic n="list" w="22" h="16" />
              <Ic n="bag" w="18" h="23" />
              <Ic n="help" w="22" h="22" />
              <Ic n="person" w="22" h="22" />
            </div>
            <div class="me">YT</div>
          </header>

          <div class="body">
            <aside class="side">
              <div class="project">
                <span class="badge">I</span><b>IPTS</b>
                <Ic n="add" w="21" class="plus" />
              </div>
              <div class="row" v-for="s in services" :key="s.label">
                <Ic :n="s.icon" w="32" :h="s.h" /><span>{{ s.label }}</span>
              </div>
              <div class="group">
                <div class="row strong"><Ic n="repos" w="30" h="32" class="rp" /><span>Repos</span></div>
                <div class="sub" v-for="r in repoItems" :key="r.label" :class="{ sel: r.selected }">
                  <Ic :n="r.icon" w="22" h="24" /><span>{{ r.label }}</span>
                </div>
              </div>
              <div class="row low" v-for="s in services2" :key="s.label">
                <Ic :n="s.icon" w="32" /><span>{{ s.label }}</span>
              </div>
              <div class="settings">
                <Ic n="gear" w="22" /><span>Project settings</span>
                <Ic n="collapse" w="21" class="plus" />
              </div>
            </aside>

            <main class="content">
              <div class="titlebar">
                <h1>Implemented/Extended BEXes processing logic</h1>
                <div class="actions">
                  <div class="approve"><span>Approve</span><i><Ic n="chevron" w="16" h="9" /></i></div>
                  <div class="cancel">
                    <span><Ic n="bolt" w="21" h="22" />Cancel auto-complete</span>
                    <i><Ic n="chevron" w="16" h="9" /></i>
                  </div>
                  <div class="morebtn"><Ic n="more" w="4" h="20" /></div>
                </div>
              </div>
              <div class="meta">
                <span class="pill">Active</span>
                <span>!17558</span>
                <span class="ava">YT</span>
                <span>Yevhen Tiurtiubek</span>
                <a>feature/78685-Extend-GetWizardInfo-method</a>
                <span>into</span>
                <a>develop</a>
                <span>0/4 comments resolved</span>
              </div>
              <nav class="prtabs">
                <span v-for="t in prTabs" :key="t" :class="{ on: t === 'Conflicts' }">{{ t }}</span>
              </nav>
              <div class="notice">The merge of this pull request has no conflicts.</div>
            </main>
          </div>
        </div>
      </div>
    </div>

    <footer class="taskbar">
      <div class="sys"><Ic n="windows" w="28" h="27" /></div>
      <div class="sys"><Ic n="taskFind" w="22" h="23" /></div>
      <div class="sys"><Ic n="taskView" w="22" h="22" /></div>
      <div class="apps">
        <div v-for="a in apps" :key="a.icon" class="app" :class="{ open: a.open, stack: a.stack }">
          <Ic :n="a.icon" :w="a.w" :h="a.h" />
          <span v-if="a.icon === 'rider'" class="rd">RD</span>
        </div>
      </div>
      <div class="time"><span>14:55</span><span>4/5/2021</span></div>
    </footer>
  </div>
</template>

<style>
body { margin: 0; overflow: hidden; background: #16191e; }
</style>
<style scoped>
* { box-sizing: border-box; }
i { font-style: normal; }
.screen {
  width: 1920px; height: 1200px; display: flex; flex-direction: column; overflow: hidden;
  font: 400 18px/24px "Open Sans", "Noto Sans", sans-serif; letter-spacing: -0.220px; white-space: nowrap;
  background: #16191e;
}
.browser { display: flex; height: 1147px; }

/* Opera side rail */
.rail { width: 53px; padding-right: 1px; display: flex; flex-direction: column; align-items: center; background: #16191e; height: 1147px; }
.r-opera { margin-top: 13px; }
.r-home { width: 32px; height: 33px; margin-top: 77px; border-radius: 4px; background: #42aee8; }
.r-star { margin-top: 31px; }
.dash { width: 16px; height: 2px; background: #7b8086; flex: none; }
.d1 { margin-top: 28px; }
.r-msg { margin-top: 26px; }
.d2 { margin-top: 26px; }
.r-play { margin-top: 27px; }
.d3 { margin-top: 29px; }
.r-heart { margin-top: 28px; }
.r-clock { margin-top: 37px; }
.dots { display: flex; gap: 4px; margin-top: auto; margin-bottom: 25px; }
.dots i { width: 4px; height: 4px; border-radius: 50%; background: #e3e5e7; }

.window { width: 1867px; display: flex; flex-direction: column; }

/* tab strip */
.tabstrip { height: 41px; display: flex; background: #181b20; }
.tab { flex: none; height: 41px; display: flex; align-items: center; padding-left: 9.400px; position: relative; }
.tab::after { content: ""; position: absolute; right: -0.500px; top: 9px; width: 1.500px; height: 23px; background: #9a9da1; }
.tab.noline::after { display: none; }
.tab.active { background: #3a444f; padding-left: 6.600px; }
.tab.after { padding-left: 11.500px; }
.fav { width: 22px; display: flex; justify-content: center; }
.dou { width: 21px; height: 21px; background: #000; color: #fff; font: 800 9px/21px "Open Sans", sans-serif; letter-spacing: -0.200px; text-align: center; }
.tabtext { margin-left: 3px; width: 22px; overflow: hidden; font-size: 15.500px; color: #e2e3e5; letter-spacing: -0.500px;
  -webkit-mask-image: linear-gradient(90deg, #000 60%, rgba(0,0,0,.15)); mask-image: linear-gradient(90deg, #000 60%, rgba(0,0,0,.15)); }
.tabclose { margin-left: 7px; }
.newtab { margin: 12px 0 0 11px; }
.wincontrols { display: flex; margin-left: 70px; }
.c1 { margin-top: 9px; }
.c2 { margin: 12px 0 0 36px; }
.c3 { margin: 12px 0 0 37px; }
.c4 { margin: 12px 0 0 36px; }

/* address bar */
.address { height: 51px; display: flex; align-items: center; background: #3a444f; padding-left: 20px; }
.bar { width: 2px; height: 20px; background: #d5d8db; }
.a2 { margin-left: 34px; }
.a3 { margin-left: 28.500px; }
.a4 { margin-left: 24px; }
.a5 { margin-left: 19.500px; }
.vpn { margin-left: 23px; width: 33px; height: 19px; border: 1.500px solid #c5cace; border-radius: 2px; color: #d5d9dc; font-size: 12px; font-weight: 500; line-height: 16px; letter-spacing: .6px; text-align: center; }
.a6 { margin-left: 12.500px; }
.url { margin-left: 26px; color: #aeb6be; letter-spacing: -0.150px; }
.url b { font-weight: 400; color: #fff; letter-spacing: -0.300px; }
.tools { margin-left: auto; margin-right: 19.500px; display: flex; align-items: center; }
.t2 { margin-left: 16px; }
.t3 { margin-left: 18px; }
.t4 { margin-left: 15px; }
.t5 { margin-left: 11px; }
.t6 { margin-left: 19px; margin-top: -2px; }
.t7 { margin-left: 23px; }
.t8 { margin-left: 24px; }
.t9 { margin-left: 27px; }

/* bookmarks */
.bookmarks { height: 42px; display: flex; background: #3a444f; border-bottom: 1px solid #20262c; padding-left: 21px; color: #e8eaec; font-size: 15.400px; letter-spacing: -0.170px; }
.bm { display: flex; align-items: center; height: 37px; }
.bm span { padding-bottom: 2px; }
.b1 { width: 82px; gap: 12.500px; }
.b2 { width: 98px; gap: 12.500px; }
.b3 { width: 89.500px; gap: 12.500px; }
.b4 { width: 198.500px; gap: 11.500px; }
.b5 { gap: 11px; }

/* page */
.page { height: 1013px; display: flex; flex-direction: column; background: #e5e5e5; }
.top { height: 65px; background: #ebebeb; border-bottom: 1px solid #cfcfcf; display: flex; align-items: center; padding-left: 17.500px; }
.logo { margin-top: 3px; }
.brand { margin: 3px 0 0 17.500px; width: 297px; font-weight: 700; color: #1173c5; letter-spacing: -0.050px; }
.crumbs { display: flex; align-items: center; color: #858585; width: 892.500px; letter-spacing: -0.250px; }
.crumbs span, .slash { padding-top: 3px; }
.slash { width: 50px; text-align: center; color: #a5a5a5; }
.crumbs .cur { margin-left: 5px; letter-spacing: -0.350px; }
.cchev { margin-left: 13px; color: #777; }
.searchbox { width: 267px; height: 43px; border: 1.500px solid #7b7b7b; border-radius: 2px; display: flex; align-items: center; padding-left: 10px; color: #7c7c7c; }
.searchbox span { margin-left: 12.500px; padding-top: 3px; letter-spacing: -0.350px; }
.topicons { display: flex; align-items: center; margin-left: 37px; width: 214px; justify-content: space-between; }
.me { margin-left: 31px; width: 43px; height: 43px; border-radius: 50%; background: #0672cb; color: #cfe2f5; font-size: 17px; line-height: 43px; text-align: center; }
.body { display: flex; height: 948px; }

/* project navigation */
.side { width: 347px; background: #d8d8d8; border-right: 1px solid #cccccc; display: flex; flex-direction: column; color: #3d3d3d; }
.project { height: 65px; margin: 0 14px 5px 13px; padding-left: 3px; border-bottom: 1.500px solid #c2c2c2; display: flex; align-items: center; color: #1f1f1f; }
.badge { width: 32px; height: 32px; border-radius: 4px; background: #087f6c; color: #d5ece8; font-size: 17px; line-height: 32px; text-align: center; }
.project b { margin-left: 14px; letter-spacing: .2px; padding-top: 1px; }
.plus { margin-left: auto; margin-right: 7px; }
.row { height: 64px; display: flex; align-items: center; padding-left: 16px; flex: none; }
.row span, .sub span { margin-left: 14.500px; padding-top: 2px; }
.low span { padding-top: 4px; }
.group { background: #cbcbcb; border-left: 4px solid #a2a3a5; }
.group .row { padding-left: 13px; font-weight: 600; }
.row .rp + span { margin-left: 15.500px; }
.sub { height: 53.330px; display: flex; align-items: center; padding-left: 16px; }
.sub span { margin-left: 20.500px; padding-top: 3px; }
.sub.sel { margin-left: -4px; padding-left: 16px; border-left: 4px solid #0672cb; background: #bfbfbf; font-weight: 600; color: #333; letter-spacing: -0.300px; }
.settings { margin: auto 14px 0 13px; height: 66px; padding-left: 7px; border-top: 1.500px solid #c2c2c2; display: flex; align-items: center; }
.settings > span { margin-left: 20.500px; padding-top: 3px; letter-spacing: -0.100px; }

/* pull request */
.content { flex: 1; padding-left: 43px; }
.titlebar { display: flex; height: 73px; }
h1 { margin: 31px 0 0; width: 917px; font-size: 26.600px; line-height: 38px; font-weight: 400; letter-spacing: 0; color: #333; }
.actions { display: flex; align-items: flex-start; margin-top: 27px; font-weight: 600; }
.approve, .cancel { display: flex; height: 44px; line-height: 44px; border-radius: 2px; }
.approve { width: 152px; background: #d7d7d7; color: #333; }
.approve span { width: 109px; border-right: 1.500px solid #bcbcbc; padding-left: 18.500px; padding-top: 1px; }
.approve i, .cancel i { flex: 1; display: flex; justify-content: center; align-items: center; }
.cancel { margin-left: 11px; width: 298.500px; background: #0672cb; color: #fff; }
.cancel span { width: 255px; border-right: 1.500px solid #055ba3; display: flex; align-items: center; gap: 12px; padding-left: 18px; padding-top: 1px; letter-spacing: -0.120px; }
.morebtn { margin-left: 10.500px; width: 46px; height: 45px; background: #d9d9d9; border-radius: 2px; display: flex; justify-content: center; align-items: center; }
.meta { display: grid; grid-template-columns: 77px 66.500px 43px 157px 381px 38.500px 76.500px 1fr; align-items: center; height: 40px; color: #858585; letter-spacing: -0.110px; }
.meta > * { padding-top: 2px; }
.meta a { color: #13599b; }
.meta .pill { padding: 0; width: 67px; height: 30px; border-radius: 15px; background: #0672cb; color: #fff; font-size: 15px; font-weight: 600; line-height: 30px; text-align: center; }
.meta .ava { padding: 0; width: 32px; height: 32px; border-radius: 50%; background: #0672cb; color: #b9d6f0; font-size: 11px; line-height: 32px; text-align: center; }
.prtabs { display: grid; grid-template-columns: 100px 58px 92px 95.500px 75px; height: 71px; padding: 28px 0 0 1px; color: #444; letter-spacing: -0.220px; }
.prtabs .on { border-bottom: 3px solid #1173c5; font-weight: 600; color: #333; padding-left: .5px; }
.notice { margin: 47px 0 0 20.500px; width: 361px; height: 36px; background: #dfe2eb; color: #2b2b2b; font-size: 15.200px; line-height: 37px; padding-left: 15px; letter-spacing: -0.030px; }

/* taskbar */
.taskbar { height: 53px; display: flex; background: linear-gradient(90deg, #1a242a 0, #1a2227 500px, #1c1d20 760px, #1a1d22 1500px, #191c22 100%); }
.sys { width: 64px; display: flex; justify-content: center; align-items: center; }
.apps { display: flex; gap: 3.850px; margin: 1px 0 0 5px; }
.app { width: 61.500px; height: 51px; display: flex; justify-content: center; align-items: center; position: relative; }
.open { background: #45494c; border: 1px solid #7d8183; }
.stack { padding-right: 6px; }
.stack::after { content: ""; position: absolute; right: 3px; top: 0; bottom: 0; width: 3px; border-left: 1px solid #7d8183; border-right: 1px solid #2a2e31; background: #3a3e41; }
.rd { position: absolute; left: 22px; top: 13px; font: 800 12px/14px "Open Sans", sans-serif; color: #fff; letter-spacing: -0.500px; }
.time { margin-left: auto; width: 86px; display: flex; flex-direction: column; align-items: center; color: #f0f0f0; font-size: 15.200px; line-height: 24.500px; padding-top: 1.500px; letter-spacing: -0.400px; }
</style>
